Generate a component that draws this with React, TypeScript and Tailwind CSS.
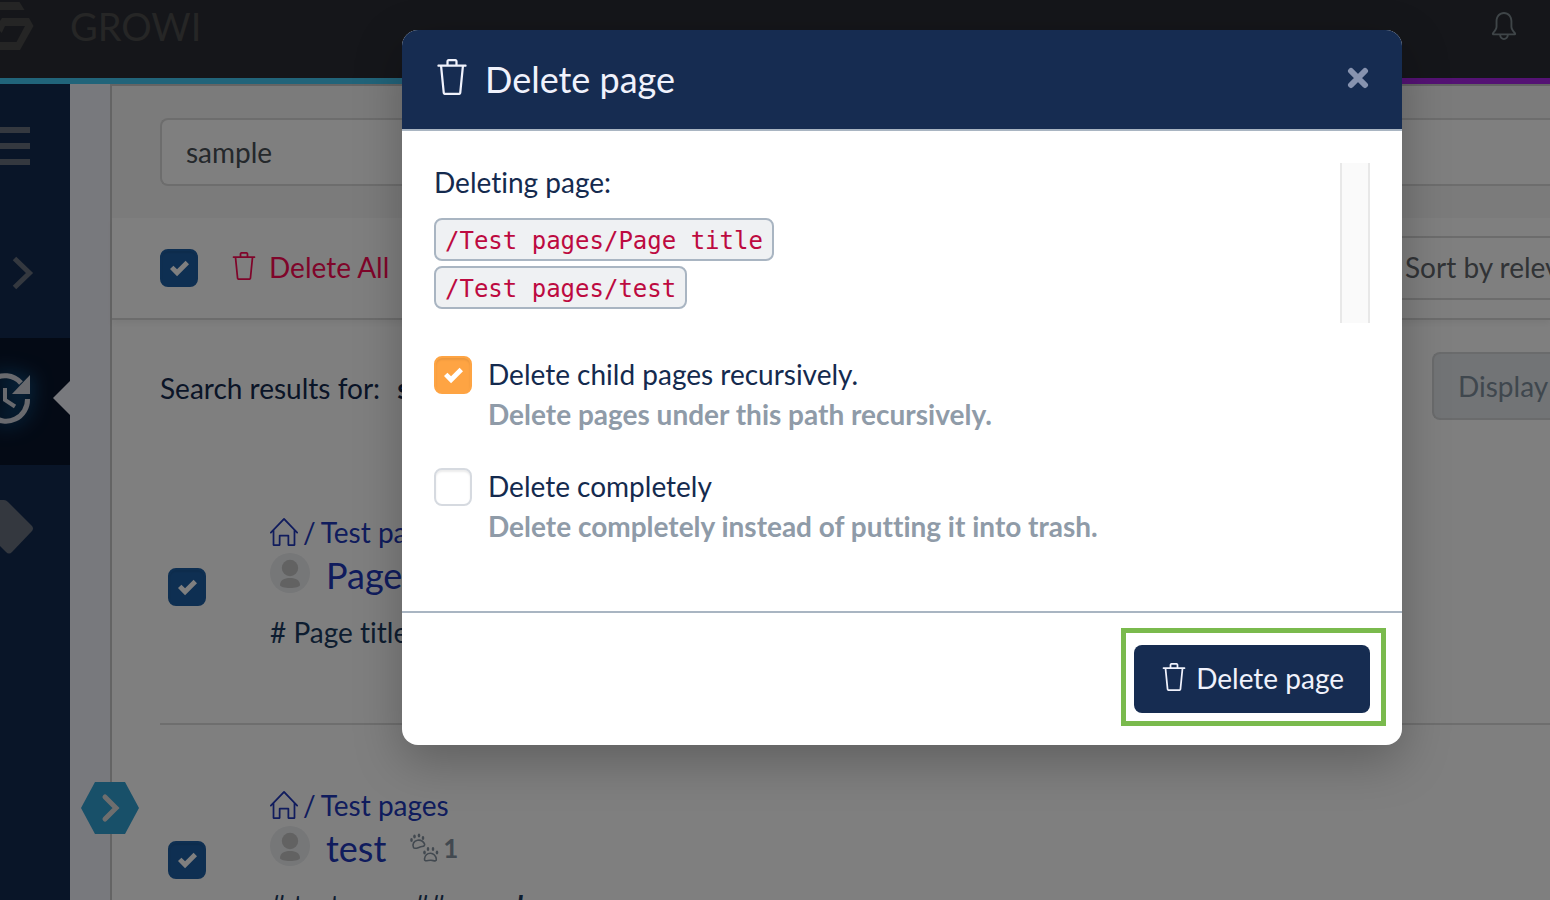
import React from 'react';
import { SlTrash, SlBell, SlHome } from 'react-icons/sl';

function Logo() {
  return (
    <svg viewBox="0 0 35 54" className="h-[54px] w-[35px] shrink-0" fill="#4a4a4a" aria-hidden="true">
      <path d="M0 2H19.500L24.500 10H0Z" />
      <path fillRule="evenodd" d="M2 18H29L33.500 26L20 50H0V42H16.500L25 26H5L1.700 33L0 31V21Z" />
    </svg>
  );
}

function Check({ className }: { className: string }) {
  return (
    <svg viewBox="0 0 8 8" className={className} fill="currentColor" aria-hidden="true">
      <path d="M6.564.75l-3.59 3.612-1.538-1.550L0 4.260l2.974 2.990L8 2.193z" />
    </svg>
  );
}

function TickBox({ id, tone, checked, label }: { id: string; tone: string; checked: boolean; label?: string }) {
  return (
    <span className="relative grid h-[38px] w-[38px] shrink-0 place-items-center">
      <input
        id={id}
        type="checkbox"
        defaultChecked={checked}
        aria-label={label}
        className={`peer col-start-1 row-start-1 h-full w-full appearance-none rounded-lg border-2 shadow-[inset_0_2px_2px_rgba(0,0,0,0.08)] ${tone}`}
      />
      <Check className="pointer-events-none invisible col-start-1 row-start-1 h-[19px] w-[19px] text-white peer-checked:visible" />
    </span>
  );
}

const dimTone = 'border-[#1d5fa5] bg-[#1d5fa5]';

function Avatar() {
  return (
    <svg viewBox="0 0 40 40" className="h-10 w-10 shrink-0" aria-hidden="true">
      <circle cx="20" cy="20" r="20" fill="#eceef1" />
      <circle cx="20" cy="15" r="8.200" fill="#c4c4c4" />
      <path d="M10 32C10 27.500 14 25 20 25S30 27.500 30 32C30 34 25 35 20 35S10 34 10 32Z" fill="#c4c4c4" />
    </svg>
  );
}

function Paws() {
  return (
    <svg viewBox="0 0 30 30" className="h-[30px] w-[30px]" fill="currentColor" aria-hidden="true">
      <path d="M3.500 14.500C2 11 4 7.800 7.500 7.200S13.500 9 14.300 10.500S14.500 13.300 12 13.500S4.500 17 3.500 14.500Z" fill="none" stroke="currentColor" strokeWidth="1.600" />
      <ellipse cx="1.500" cy="7" rx="1.300" ry="1.900" />
      <ellipse cx="4.500" cy="3.500" rx="1.300" ry="1.900" />
      <ellipse cx="9" cy="2.500" rx="1.300" ry="1.900" />
      <ellipse cx="13" cy="5" rx="1.300" ry="1.900" />
      <path d="M14.500 26C15 22 17.500 20.200 20.500 20.200S26 23 26.300 26S24 27.500 21 27.300S14 29 14.500 26Z" fill="none" stroke="currentColor" strokeWidth="1.600" />
      <ellipse cx="14.500" cy="19.500" rx="1.300" ry="1.900" />
      <ellipse cx="18" cy="16" rx="1.300" ry="1.900" />
      <ellipse cx="23" cy="16" rx="1.300" ry="1.900" />
      <ellipse cx="27" cy="19.500" rx="1.300" ry="1.900" />
    </svg>
  );
}

function Result({ id, trail, title, count, children }: { id: string; trail: string; title: string; count?: number; children: React.ReactNode }) {
  return (
    <li className="flex h-[273px] border-b-2 border-[#dcdcdc] pt-16 pl-2">
      <div className="w-[102px] shrink-0 pt-[52px]">
        <TickBox id={id} tone={dimTone} checked label={`Select ${title}`} />
      </div>
      <div className="min-w-0 whitespace-nowrap">
        <a href="#trail" className="flex h-8 items-center gap-[5px] text-[28px] leading-8 text-[#2138bb]">
          <SlHome className="h-7 w-7" />
          <span>/</span>
          <span>{trail}</span>
        </a>
        <div className="mt-px flex h-[48px] items-center">
          <Avatar />
          <a href="#page" className="ml-4 pt-1 text-[36px] leading-[44px] text-[#2138bb]">{title}</a>
          {count !== undefined && (
            <span className="ml-6 flex items-center gap-[3px] pt-1 text-[26px] font-bold text-[#8592a0]"><Paws />{count}</span>
          )}
        </div>
        <p className="mt-[15px] text-[28px] leading-[40px] text-[#1a3a60]">{children}</p>
      </div>
    </li>
  );
}

function Sidebar() {
  return (
    <nav aria-label="Sidebar" className="flex w-[70px] shrink-0 flex-col bg-[#132b50]">
      <button aria-label="Menu" className="flex h-[124px] flex-col justify-center gap-[10px]">
        <span className="h-[6px] w-[30px] bg-[#68707f]" />
        <span className="h-[6px] w-[30px] bg-[#68707f]" />
        <span className="h-[6px] w-[30px] bg-[#68707f]" />
      </button>
      <button aria-label="Expand" className="flex h-[130px] items-center pl-3">
        <svg viewBox="0 0 22 34" className="h-[34px] w-[22px]" fill="none" stroke="#68707f" strokeWidth="5" aria-hidden="true">
          <path d="M2.500 2.500L17.500 17L2.500 31.500" />
        </svg>
      </button>
      <button aria-label="Recent changes" className="flex h-[127px] items-center justify-between overflow-hidden bg-[#08142a] pb-[7px]">
        <svg viewBox="0 0 30 80" className="h-20 w-[30px] overflow-visible drop-shadow-[0_0_10px_#1689d8]" fill="none" aria-hidden="true">
          <path d="M-8 22A21.500 21.500 0 0 1 21 25M27.500 41A21.500 21.500 0 0 1 -8 58" stroke="#d2d4dd" strokeWidth="5" />
          <path d="M30 17V36H12Z" fill="#d2d4dd" />
          <path d="M5 30V42L15 48.500" stroke="#d2d4dd" strokeWidth="4" />
        </svg>
        <svg viewBox="0 0 17 34" className="h-[34px] w-[17px]" fill="#f1f2fa" aria-hidden="true"><path d="M17 0V34L0 17Z" /></svg>
      </button>
      <button aria-label="Tags" className="flex h-[124px] items-center">
        <svg viewBox="0 0 34 56" className="h-14 w-[34px]" fill="#68707f" aria-hidden="true">
          <path d="M0 1H4Q6 1 8 3L32 27Q34 29.500 32 32L12 53Q9 56 6 53L0 47Z" />
        </svg>
      </button>
    </nav>
  );
}

function Dialog() {
  return (
    <section role="dialog" aria-modal="true" aria-labelledby="dialog-title" className="w-[1000px] overflow-hidden rounded-2xl bg-white shadow-[0_16px_48px_rgba(0,0,0,0.25)]">
      <header className="flex h-[101px] items-center border-b-2 border-[#a9b5c2] bg-[#162c51] px-8 pb-[2px] text-[#f0f2fc]">
        <SlTrash className="mb-1 h-9 w-9" />
        <h2 id="dialog-title" className="ml-[15px] flex-1 text-[36px] leading-[54px]">Delete page</h2>
        <button aria-label="Close" className="mb-[2px] grid h-6 w-6 place-items-center text-[#8793af]">
          <svg viewBox="0 0 22 24" className="h-6 w-[22px]" fill="none" stroke="currentColor" strokeWidth="6" strokeLinecap="round" aria-hidden="true"><path d="M4 5L18 19M18 5L4 19" /></svg>
        </button>
      </header>
      <div className="px-8 pt-8 text-[28px] text-[#142a4e]">
        <div className="flex h-40 justify-between">
          <div>
            <p className="leading-[38px]">Deleting page:</p>
            <ul className="mt-[17px] flex flex-col items-start gap-[5px]">
              {['/Test pages/Page title', '/Test pages/test'].map((path) => (
                <li key={path} className="flex">
                  <code className="h-[43px] rounded-lg border-2 border-[#a9b5c2] bg-[#eff1f3] px-[9px] font-['DejaVu_Sans_Mono',monospace] text-[24px] leading-[42px] text-[#bd0a40]">{path}</code>
                </li>
              ))}
            </ul>
          </div>
          <div className="w-[30px] border-x-2 border-[#e8e8e8] bg-[#fafafa]" />
        </div>
        <div className="mt-[31px] flex gap-4 leading-10">
          <div className="pt-[2px]"><TickBox id="recursive" checked tone="border-[#fea443] bg-[#fea443]" /></div>
          <div>
            <label htmlFor="recursive" className="block">Delete child pages recursively.</label>
            <p className="font-bold text-[#8f9ba8]">Delete pages under this path recursively.</p>
          </div>
        </div>
        <div className="mt-8 mb-[65px] flex gap-4 leading-10">
          <div className="pt-[2px]"><TickBox id="completely" checked={false} tone="border-[#d6dae0] bg-white checked:border-[#fea443] checked:bg-[#fea443]" /></div>
          <div>
            <label htmlFor="completely" className="block">Delete completely</label>
            <p className="font-bold text-[#8f9ba8]">Delete completely instead of putting it into trash.</p>
          </div>
        </div>
      </div>
      <footer className="flex justify-end border-t-2 border-[#a9b5c2] px-4 pt-[15px] pb-[19px]">
        <div className="border-[5px] border-[#7aba4d] pt-3 pr-[11px] pb-2 pl-2">
          <button className="flex h-[68px] items-center gap-2 rounded-lg bg-[#162c51] px-[26px] pb-[2px] text-[28px] text-[#f0f2fc]">
            <SlTrash className="mb-[2px] h-7 w-7" />Delete page
          </button>
        </div>
      </footer>
    </section>
  );
}

export default function App() {
  return (
    <div className="relative h-screen overflow-hidden bg-white font-[Lato,sans-serif] [font-variant-ligatures:none]">
      <div className="flex h-full flex-col">
        <header className="flex h-[78px] shrink-0 items-start bg-[#2a2d34]">
          <Logo />
          <span className="ml-[35px] text-[38px] leading-[52px] text-[#4c4c4c]">GROWI</span>
          <button aria-label="Notifications" className="mt-3 mr-8 ml-auto text-[#7e8a91]"><SlBell className="h-7 w-7" /></button>
        </header>
        <div className="h-[6px] shrink-0 bg-linear-to-r from-[#43c8f5] from-25% to-[#a925e8] to-90%" />
        <div className="flex min-h-0 flex-1">
          <Sidebar />
          <div className="w-10 shrink-0 bg-[#f1f2fa]" />
          <main className="min-w-0 flex-1 border-t-2 border-l-2 border-[#c8c8c8] bg-white">
            <div className="h-[132px] bg-[#f7f7f7] pt-8 pl-12">
              <input aria-label="Search" defaultValue="sample" className="h-[68px] w-full rounded-l-lg border-2 border-r-0 border-[#dadada] bg-white px-6 text-[28px] text-[#495057]" />
            </div>
            <div className="flex h-[102px] items-center border-b-2 border-[#d8d8d8] pl-12 shadow-[0_4px_6px_rgba(0,0,0,0.05)]">
              <TickBox id="all" tone={dimTone} checked label="Select all" />
              <button className="ml-8 flex items-center gap-[11px] pb-[2px] text-[28px] text-[#ff0a54]"><SlTrash className="mb-[2px] h-7 w-7" />Delete All</button>
              <button className="ml-auto h-16 w-[170px] overflow-hidden border-y-2 border-[#d8d8d8] pb-[2px] pl-[25px] text-left text-[28px] whitespace-nowrap text-[#62676c]">Sort by relevance</button>
            </div>
            <div className="flex h-[132px] items-center pl-12 text-[28px]">
              <p className="pt-1 text-[#142a4e]">Search results for: <strong className="ml-[10px]">sample</strong></p>
              <button className="ml-auto h-[68px] w-[118px] overflow-hidden rounded-l-lg border-2 border-r-0 border-[#d4d6d8] bg-[#e5e8ec] pl-6 text-left whitespace-nowrap text-[#7f8e9c]">Display</button>
            </div>
            <ul className="pl-12">
              <Result id="r1" trail="Test pages" title="Page title"># Page title</Result>
              <Result id="r2" trail="Test pages" title="test" count={1}># test page ## <em className="font-bold">sample</em></Result>
            </ul>
          </main>
        </div>
      </div>
      <button aria-label="Open sidebar" className="absolute top-[781px] left-20">
        <svg viewBox="0 0 60 54" className="h-[54px] w-[60px]" aria-hidden="true">
          <path d="M1 27L15 1H45L59 27L45 53H15Z" fill="#30a0d2" />
          <path d="M25 16L36 27L25 38" fill="none" stroke="#ddd" strokeWidth="5" strokeLinecap="round" />
        </svg>
      </button>
      <div className="absolute inset-0 flex items-start justify-center bg-black/50 pt-[30px] pl-[254px]">
        <Dialog />
      </div>
    </div>
  );
}
